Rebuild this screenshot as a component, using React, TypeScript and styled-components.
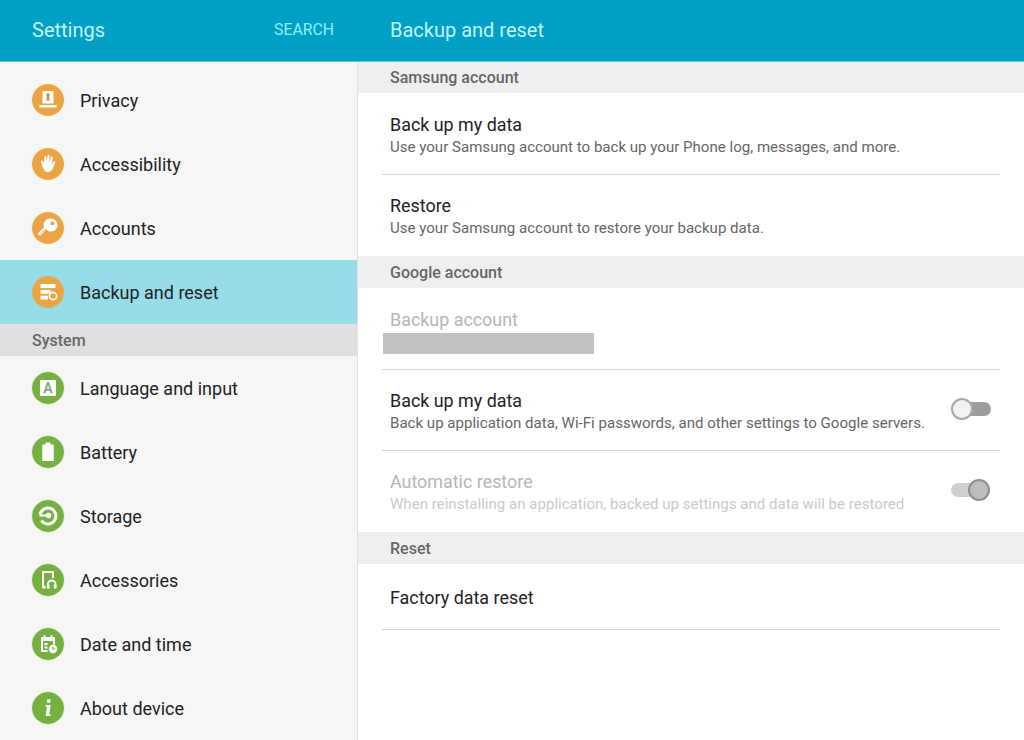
import React from "react";
import styled, { createGlobalStyle } from "styled-components";

const GlobalStyle = createGlobalStyle`
  html, body {
    margin: 0;
    padding: 0;
    background: #fff;
    font-family: Roboto, "Liberation Sans", sans-serif;
  }
  * {
    box-sizing: border-box;
  }
`;

const icons: Record<string, React.ReactNode> = {
  privacy: (
    <>
      <path d="M10.5 7h11v12.5h-11z" fill="#fff" />
      <path d="M16 9.2a1.7 1.7 0 0 1 1 3l.7 4.3h-3.4l.7-4.3a1.7 1.7 0 0 1 1-3z" fill="#c98a3a" />
      <path d="M7.5 21h17v2.6h-17z" fill="#fff" />
    </>
  ),
  hand: (
    <path
      transform="translate(-2.6 -3) scale(1.18)"
      d="M10.3 13.2c.5-.3 1 0 1.2.5l1 2.5.2-6.3c0-.7 1.4-.8 1.6 0l.5 5 .6-6c.1-.8 1.6-.8 1.6.1l.1 6 1.1-5c.2-.8 1.6-.5 1.5.3l-.7 6.2 1.6-2.6c.5-.7 1.6-.1 1.3.7l-2 5.2c-.7 2-2 3.2-4.2 3.2-2.3 0-3.3-1.2-4-3.2l-1.9-5.3c-.1-.5 0-.9.5-1.1z"
      fill="#fff"
    />
  ),
  key: (
    <>
      <path d="M19 6.5a6.5 6.5 0 1 1-4.8 10.9l-5.4 5.9-2.3.2-.3-2.6 5.8-5.6a6.5 6.5 0 0 1 7-8.8z" fill="#fff" />
      <circle cx="20.4" cy="11.6" r="2" fill="#eaa444" />
      <path d="M8.3 21.8l5-5" stroke="#eaa444" strokeWidth="1" />
    </>
  ),
  backup: (
    <>
      <path d="M8.5 8h15v4h-15zM8.5 14h10v3.8h-10zM8.5 19.8h7.5v3.8H8.5z" fill="#fff" />
      <circle cx="21" cy="20" r="3.6" fill="none" stroke="#fff" strokeWidth="1.6" />
    </>
  ),
  language: (
    <>
      <rect x="8" y="8" width="16" height="16" fill="#fff" rx="1" />
      <text x="16" y="21.2" textAnchor="middle" fontSize="14" fontWeight="700" fontFamily="Roboto, sans-serif" fill="#8aa878">
        A
      </text>
    </>
  ),
  battery: <path d="M13.5 6.5h5v2h2.2c.7 0 1.1.4 1.1 1.1v14.3c0 .7-.4 1.1-1.1 1.1h-9.4c-.7 0-1.1-.4-1.1-1.1V9.6c0-.7.4-1.1 1.1-1.1h2.2z" fill="#fff" />,
  storage: (
    <>
      <path d="M8.1 14.5A8 8 0 1 1 9.4 20.5" fill="none" stroke="#fff" strokeWidth="3" />
      <circle cx="16.5" cy="15.5" r="2.8" fill="#fff" />
      <path d="M7.5 14.5h8v2h-8z" fill="#fff" />
    </>
  ),
  accessories: (
    <>
      <path d="M10 7h11c.6 0 1 .4 1 1v6h-2V9h-8v13h1.5v2.5H11c-.6 0-1-.4-1-1z" fill="#fff" />
      <path d="M15.8 22v-1.6a3.9 3.9 0 0 1 7.8 0V22" fill="none" stroke="#fff" strokeWidth="1.8" />
      <rect x="14.8" y="20.6" width="2.8" height="4.2" rx=".8" fill="#fff" />
      <rect x="21.8" y="20.6" width="2.8" height="4.2" rx=".8" fill="#fff" />
    </>
  ),
  date: (
    <>
      <path d="M9 9h2.5V7.2h2V9h5V7.2h2V9H23v7.5h-2V13H11v9h4.5v2H9z" fill="#fff" />
      <path d="M12.5 15h3v2h-3zM12.5 18.5h3v2h-3z" fill="#fff" />
      <circle cx="21" cy="21" r="4.2" fill="#fff" />
      <path d="M21 18.6V21h2.2" fill="none" stroke="#76b041" strokeWidth="1.1" />
    </>
  ),
  about: (
    <>
      <circle cx="16.8" cy="9" r="1.9" fill="#fff" />
      <path d="M13.8 13h5l-1.6 9.2 1.5.2-.3 1.6h-4.9l1.5-9.3-1.5-.1z" fill="#fff" />
    </>
  ),
};

const groups = [
  {
    items: [
      { icon: "privacy", label: "Privacy", color: "#eaa444" },
      { icon: "hand", label: "Accessibility", color: "#eaa444" },
      { icon: "key", label: "Accounts", color: "#eaa444" },
      { icon: "backup", label: "Backup and reset", color: "#eaa444", active: true },
    ],
  },
  {
    title: "System",
    items: [
      { icon: "language", label: "Language and input", color: "#76b041" },
      { icon: "battery", label: "Battery", color: "#76b041" },
      { icon: "storage", label: "Storage", color: "#76b041" },
      { icon: "accessories", label: "Accessories", color: "#76b041" },
      { icon: "date", label: "Date and time", color: "#76b041" },
      { icon: "about", label: "About device", color: "#76b041" },
    ],
  },
];

const App: React.FC = () => {
  return (
    <Page>
      <GlobalStyle />
      <Header>
        <HeaderLeft>
          <HeaderTitle>Settings</HeaderTitle>
          <SearchLabel>SEARCH</SearchLabel>
        </HeaderLeft>
        <HeaderTitle>Backup and reset</HeaderTitle>
      </Header>
      <Body>
        <Sidebar>
          {groups.map((group, index) => (
            <React.Fragment key={index}>
              {group.title && <SideSection>{group.title}</SideSection>}
              {group.items.map((item) => (
                <SideItem key={item.label} $active={!!item.active}>
                  <IconCircle viewBox="0 0 32 32" $color={item.color}>
                    <circle cx="16" cy="16" r="16" fill={item.color} />
                    {icons[item.icon]}
                  </IconCircle>
                  <SideLabel>{item.label}</SideLabel>
                </SideItem>
              ))}
            </React.Fragment>
          ))}
        </Sidebar>
        <Content>
          <Section>Samsung account</Section>
          <Row $height={82}>
            <div>
              <RowTitle $first>Back up my data</RowTitle>
              <RowSub>Use your Samsung account to back up your Phone log, messages, and more.</RowSub>
            </div>
          </Row>
          <Row $noLine>
            <div>
              <RowTitle>Restore</RowTitle>
              <RowSub>Use your Samsung account to restore your backup data.</RowSub>
            </div>
          </Row>
          <Section $tall>Google account</Section>
          <Row $height={82}>
            <div>
              <RowTitle $first $disabled>Backup account</RowTitle>
              <Redacted />
            </div>
          </Row>
          <Row>
            <div>
              <RowTitle>Back up my data</RowTitle>
              <RowSub>Back up application data, Wi-Fi passwords, and other settings to Google servers.</RowSub>
            </div>
            <Toggle>
              <Track $on={false} />
              <Thumb $on={false} />
            </Toggle>
          </Row>
          <Row $noLine>
            <div>
              <RowTitle $disabled>Automatic restore</RowTitle>
              <RowSub $disabled>When reinstalling an application, backed up settings and data will be restored</RowSub>
            </div>
            <Toggle>
              <Track $on />
              <Thumb $on />
            </Toggle>
          </Row>
          <Section $tall>Reset</Section>
          <ResetRow>
            <RowTitle>Factory data reset</RowTitle>
          </ResetRow>
        </Content>
      </Body>
    </Page>
  );
};

export default App;

const Page = styled.div`
  width: 1024px;
  height: 740px;
  overflow: hidden;
  display: flex;
  flex-direction: column;
`;

const Header = styled.header`
  height: 62px;
  flex: none;
  display: flex;
  align-items: center;
  background: #00a0c6;
  border-bottom: 1px solid #5cc6de;
  padding-bottom: 2px;
`;

const HeaderLeft = styled.div`
  width: 358px;
  padding: 0 24px 0 32px;
  display: flex;
  align-items: center;
  justify-content: space-between;
`;

const HeaderTitle = styled.h1`
  margin: 0;
  margin-left: 32px;
  color: #c4f3f8;
  font-size: 20px;
  font-weight: 400;
  &:first-child {
    margin-left: 0;
  }
`;

const SearchLabel = styled.span`
  color: #8ff0f5;
  font-size: 15.8px;
`;

const Body = styled.div`
  flex: 1;
  display: flex;
  min-height: 0;
`;

const Sidebar = styled.nav`
  width: 358px;
  flex: none;
  padding-top: 6px;
  background: #f6f6f6;
  border-right: 1px solid #e2e2e2;
`;

const SideItem = styled.div<{ $active: boolean }>`
  height: 64px;
  display: flex;
  align-items: center;
  gap: 16px;
  padding-left: 32px;
  background: ${({ $active }) => ($active ? "#98dcea" : "transparent")};
`;

const IconCircle = styled.svg<{ $color: string }>`
  width: 32px;
  height: 32px;
  flex: none;
  border-radius: 50%;
  box-shadow: 0 0 1px ${({ $color }) => $color};
`;

const SideLabel = styled.span`
  color: #222;
  font-size: 18px;
`;

const SideSection = styled.div`
  height: 32px;
  display: flex;
  align-items: center;
  padding-left: 32px;
  background: #e0e0e0;
  color: #666;
  font-size: 16px;
  font-weight: 500;
`;

const Content = styled.main`
  flex: 1;
  display: flex;
  flex-direction: column;
  background: #fff;
`;

const Section = styled.div<{ $tall?: boolean }>`
  height: ${({ $tall }) => ($tall ? "32px" : "31px")};
  flex: none;
  display: flex;
  align-items: center;
  padding-left: 32px;
  background: #efefef;
  color: #666;
  font-size: 16px;
  font-weight: 500;
`;

const Row = styled.div<{ $noLine?: boolean; $height?: number }>`
  height: ${({ $height }) => $height ?? 81}px;
  flex: none;
  margin: 0 24px;
  padding: 20px 9px 0 8px;
  display: flex;
  align-items: flex-start;
  justify-content: space-between;
  border-bottom: ${({ $noLine }) => ($noLine ? "none" : "1px solid #d4d4d4")};
`;

const ResetRow = styled(Row)`
  height: 66px;
  padding-top: 23px;
`;

const RowTitle = styled.div<{ $disabled?: boolean; $first?: boolean }>`
  margin-top: ${({ $first }) => ($first ? "1px" : "0")};
  color: ${({ $disabled }) => ($disabled ? "#b6b6b6" : "#222")};
  font-size: 17.9px;
  line-height: 22px;
`;

const RowSub = styled.div<{ $disabled?: boolean }>`
  color: ${({ $disabled }) => ($disabled ? "#cacaca" : "#666")};
  font-size: 15.07px;
  line-height: 22px;
`;

const Redacted = styled.div`
  width: 211px;
  height: 21px;
  margin: 2px 0 0 -7px;
  background: #c2c2c2;
`;

const Toggle = styled.div`
  width: 40px;
  height: 24px;
  margin-top: 7px;
  position: relative;
  flex: none;
`;

const Track = styled.div<{ $on: boolean }>`
  position: absolute;
  top: 5px;
  left: ${({ $on }) => ($on ? "0" : "2px")};
  right: ${({ $on }) => ($on ? "2px" : "0")};
  height: 14px;
  border-radius: 7px;
  background: ${({ $on }) => ($on ? "#cfcfcf" : "#9c9c9c")};
`;

const Thumb = styled.div<{ $on: boolean }>`
  position: absolute;
  top: 1px;
  left: ${({ $on }) => ($on ? "17px" : "0")};
  width: 22px;
  height: 22px;
  border-radius: 50%;
  background: ${({ $on }) => ($on ? "#bdbdbd" : "#f2f2f2")};
  border: 2px solid ${({ $on }) => ($on ? "#8f8f8f" : "#a8a8a8")};
`;
